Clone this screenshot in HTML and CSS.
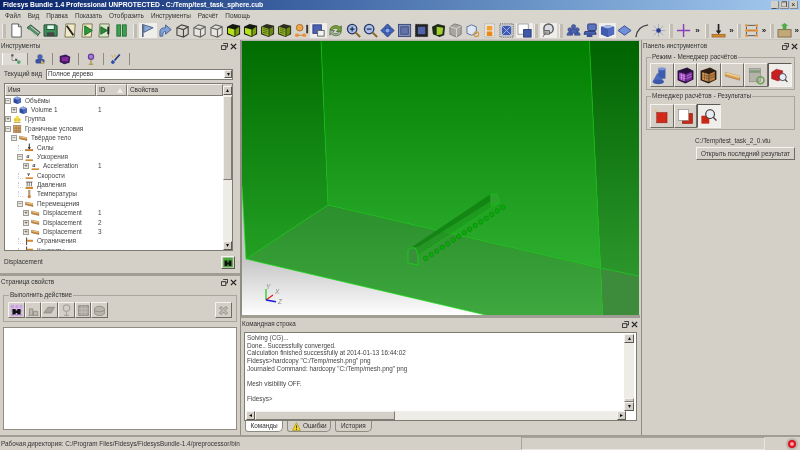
FILE: index.html
```html
<!DOCTYPE html>
<html lang="ru">
<head>
<meta charset="utf-8">
<title>Fidesys Bundle</title>
<link rel="stylesheet" href="styles.css">
</head>
<body>
<svg class="defs" width="0" height="0">
  <defs>
    <symbol id="doc" viewBox="0 0 16 16"><path d="M3 1h7l3 3v11H3z" fill="#fff" stroke="#555"/><path d="M10 1v3h3" fill="#ddd" stroke="#555"/></symbol>
    <symbol id="folder" viewBox="0 0 16 16"><path d="M1 5l4-3 10 8-3 4z" fill="#5a8f6a" stroke="#34513f"/><path d="M3 7l9 7M5 4l9 7" stroke="#cfe0d0" fill="none"/></symbol>
    <symbol id="save" viewBox="0 0 16 16"><path d="M1 2h13l1 1v11H1z" fill="#3e8f58" stroke="#274f36"/><rect x="4" y="2" width="8" height="5" fill="#dfe" stroke="#274f36"/><rect x="4" y="10" width="8" height="4" fill="#444"/></symbol>
    <symbol id="script" viewBox="0 0 16 16"><path d="M3 1h10l-1 14H2z" fill="#efe9c6" stroke="#7a7350"/><path d="M4 3l7 10" stroke="#222" stroke-width="2"/></symbol>
    <symbol id="splay" viewBox="0 0 16 16"><path d="M3 1h10l-1 14H2z" fill="#efe9c6" stroke="#7a7350"/><path d="M5 3l8 5-8 5z" fill="#2b9a3a" stroke="#176a24"/></symbol>
    <symbol id="sstep" viewBox="0 0 16 16"><path d="M3 1h10l-1 14H2z" fill="#d9e6c8" stroke="#6f7a50"/><path d="M4 4l7 4-7 4z" fill="#2b8a3a" stroke="#176a24"/><path d="M12 4v8" stroke="#222" stroke-width="2"/></symbol>
    <symbol id="pause" viewBox="0 0 16 16"><rect x="3" y="2" width="4" height="12" fill="#3fa050" stroke="#237033"/><rect x="9" y="2" width="4" height="12" fill="#3fa050" stroke="#237033"/></symbol>
    <symbol id="flag" viewBox="0 0 16 16"><path d="M3 1v14" stroke="#44506c" stroke-width="1.500"/><path d="M4 2l10 3-10 5z" fill="#8ea9d4" stroke="#47608f"/></symbol>
    <symbol id="arrow" viewBox="0 0 16 16"><path d="M2 14V9c0-3 3-4 6-4V2l6 5-6 5V9c-2 0-3 1-3 5z" fill="#7f9fd6" stroke="#45628f"/></symbol>
    <symbol id="wire" viewBox="0 0 16 16"><path d="M2 5l5-3 7 2v8l-5 3-7-2zM2 5l7 2 5-3M9 7v8" fill="none" stroke="#444" stroke-width="1.200"/></symbol>
    <symbol id="wire2" viewBox="0 0 16 16"><path d="M2 5l5-3 7 2v8l-5 3-7-2zM2 5l7 2 5-3M9 7v8" fill="#e8e6e0" stroke="#666" stroke-width="1.200"/></symbol>
    <symbol id="gcube" viewBox="0 0 16 16"><path d="M1 4l6-3 8 2v9l-6 3-8-3z" fill="#141810"/><path d="M2 5l7 2v7l-7-3z" fill="#b4e020"/><path d="M10 7l4-3v7l-4 3z" fill="#7ea016"/></symbol>
    <symbol id="gcube2" viewBox="0 0 16 16"><path d="M1 4l6-3 8 2v9l-6 3-8-3z" fill="#2c2c20"/><path d="M2 4l7 2v8l-7-3z" fill="#94b824"/><path d="M3 6l5 1M3 8l5 1M3 10l5 1" stroke="#4c6a10"/><path d="M10 6l4-2v7l-4 3z" fill="#688a12"/></symbol>
    <symbol id="nodes" viewBox="0 0 16 16"><circle cx="6" cy="5" r="3.500" fill="#f0a850" stroke="#a86a20"/><circle cx="3" cy="13" r="2" fill="#ec9a40"/><circle cx="11" cy="13" r="2" fill="#ec9a40"/><path d="M3 13h8" stroke="#d08030"/><path d="M14 2v9" stroke="#333" stroke-width="2"/></symbol>
    <symbol id="squares" viewBox="0 0 16 16"><rect x="2" y="2" width="9" height="9" fill="#4c62b4" stroke="#2a3a80"/><rect x="7" y="8" width="7" height="6" fill="#f4f4f4" stroke="#666"/></symbol>
    <symbol id="rotate" viewBox="0 0 16 16"><path d="M2 7c1-4 8-6 11-2l1-2v6h-5l2-2C9 5 5 5 4 8z" fill="#7ca33c" stroke="#4b6c24"/><path d="M14 10c-1 4-8 5-11 1l-1 2V8h5l-2 2c2 2 5 2 7-1z" fill="#a2b8a0" stroke="#5f7a50"/></symbol>
    <symbol id="zin" viewBox="0 0 16 16"><circle cx="6.500" cy="6.500" r="5" fill="#aac0e8" stroke="#283860" stroke-width="1.400"/><path d="M4 6.500h5M6.500 4v5" stroke="#1c2a50" stroke-width="1.300"/><path d="M10 10l5 5" stroke="#8a6a30" stroke-width="2.200"/></symbol>
    <symbol id="zout" viewBox="0 0 16 16"><circle cx="6.500" cy="6.500" r="5" fill="#aac0e8" stroke="#283860" stroke-width="1.400"/><path d="M4 6.500h5" stroke="#1c2a50" stroke-width="1.300"/><path d="M10 10l5 5" stroke="#8a6a30" stroke-width="2.200"/></symbol>
    <symbol id="move" viewBox="0 0 16 16"><path d="M8 1l3 3-1 2 2-1 3 3-3 3-2-1 1 2-3 3-3-3 1-2-2 1-3-3 3-3 2 1-1-2z" fill="#3f62bc" stroke="#283f80"/><circle cx="8" cy="8" r="2" fill="#8ea8e0"/></symbol>
    <symbol id="frame" viewBox="0 0 16 16"><rect x="1.500" y="1.500" width="13" height="13" fill="#8090c0" stroke="#3a4870"/><rect x="4" y="4" width="8" height="8" fill="#6272aa" stroke="#444f78"/></symbol>
    <symbol id="framed" viewBox="0 0 16 16"><rect x="1" y="1" width="14" height="14" fill="#222"/><rect x="1" y="1" width="14" height="14" fill="none" stroke="#ccc" stroke-dasharray="1 1"/><rect x="4" y="4" width="8" height="8" fill="#4f63a8"/></symbol>
    <symbol id="gdark" viewBox="0 0 16 16"><path d="M1 4l6-3 8 2-1 10-5 2-7-3z" fill="#1e2a1a"/><path d="M6 4l7 1-1 7-6 1z" fill="#a4cf30"/></symbol>
    <symbol id="gray" viewBox="0 0 16 16"><path d="M2 4l5-3 7 2v9l-5 3-7-3z" fill="#a8a6a0" stroke="#7c7a74"/><path d="M2 4l7 2 5-3M9 6v9" stroke="#d8d6d0" fill="none"/></symbol>
    <symbol id="cubeo" viewBox="0 0 16 16"><path d="M2 4l5-2 5 2v7l-5 2-5-2z" fill="#dfe6f4" stroke="#56709c"/><circle cx="12" cy="12" r="2.500" fill="none" stroke="#d89a40" stroke-width="1.300"/></symbol>
    <symbol id="orange" viewBox="0 0 16 16"><rect x="3" y="1" width="10" height="14" fill="#eee" stroke="#999" stroke-dasharray="1 1"/><rect x="5" y="3" width="6" height="5" fill="#f0a030"/><rect x="5" y="9" width="6" height="5" fill="#e88818"/></symbol>
    <symbol id="bluex" viewBox="0 0 16 16"><rect x="1" y="1" width="14" height="14" fill="#d8d8d8" stroke="#444" stroke-dasharray="1 1"/><rect x="3" y="3" width="10" height="10" fill="#3f5ab0"/><path d="M3 3l10 10M13 3L3 13" stroke="#a8b8e8"/></symbol>
    <symbol id="wblue" viewBox="0 0 16 16"><rect x="1" y="1" width="11" height="11" fill="#fff" stroke="#999"/><rect x="7" y="7" width="8" height="8" fill="#3f5aa8" stroke="#2a3a78"/></symbol>
    <symbol id="lens" viewBox="0 0 16 16"><circle cx="8" cy="6" r="5" fill="#d8dce4" stroke="#555" stroke-width="1.500"/><path d="M5 10l-3 5M3 8h6v4H3z" fill="#aaa" stroke="#666"/></symbol>
    <symbol id="people" viewBox="0 0 16 16"><g fill="#4a62b0" stroke="#2a3a78" stroke-width=".6"><circle cx="4" cy="7" r="2"/><circle cx="12" cy="7" r="2"/><circle cx="8" cy="4" r="2.300"/><path d="M1 13c0-5 6-5 6 0zM9 13c0-5 6-5 6 0z"/><path d="M4 10c0-5 8-5 8 0v1H4z"/></g></symbol>
    <symbol id="comp" viewBox="0 0 16 16"><rect x="5" y="1" width="9" height="7" rx="1" fill="#5a74c0" stroke="#2a3a78"/><path d="M2 9h11l1 3H1z" fill="#4a62b0" stroke="#2a3a78"/><rect x="4" y="12" width="6" height="3" fill="#3a4f98"/></symbol>
    <symbol id="bcube" viewBox="0 0 16 16"><path d="M1 4l8-2 6 2v8l-7 3-7-3z" fill="#2e4a98"/><path d="M1 4l7 2 7-2-6-2z" fill="#a8bce8"/><path d="M8 6v9l7-3V4z" fill="#4f6cc0"/><path d="M1 4l7 2v9l-7-3z" fill="#3f5cb0"/></symbol>
    <symbol id="diam" viewBox="0 0 16 16"><path d="M1 8l7-5 7 5-7 5z" fill="#6f90d8" stroke="#36508f"/></symbol>
    <symbol id="curve" viewBox="0 0 16 16"><path d="M2 15C3 7 8 3 15 2" fill="none" stroke="#444" stroke-width="1.500"/></symbol>
    <symbol id="star" viewBox="0 0 16 16"><path d="M8 1v14M1 8h14M3 3l10 10M13 3L3 13" stroke="#9a9fb8" stroke-width=".8"/><circle cx="8" cy="8" r="2.500" fill="#2a3a90"/></symbol>
    <symbol id="plus" viewBox="0 0 16 16"><path d="M8 1v14M1 8h14" stroke="#8a40b8" stroke-width="1.500"/></symbol>
    <symbol id="force" viewBox="0 0 16 16"><path d="M8 1v9" stroke="#222" stroke-width="1.800"/><path d="M5 8l3 4 3-4z" fill="#222"/><rect x="1" y="12" width="14" height="3" fill="#d4882e" stroke="#8a5518" stroke-width=".6"/></symbol>
    <symbol id="rnodes" viewBox="0 0 16 16"><rect x="2.500" y="2.500" width="11" height="11" fill="none" stroke="#555"/><path d="M2 8h12" stroke="#d08030" stroke-width="2"/><g fill="#e89a40"><circle cx="2.500" cy="2.500" r="1.500"/><circle cx="13.500" cy="2.500" r="1.500"/><circle cx="2.500" cy="13.500" r="1.500"/><circle cx="13.500" cy="13.500" r="1.500"/><circle cx="2.500" cy="8" r="1.500"/><circle cx="13.500" cy="8" r="1.500"/></g></symbol>
    <symbol id="box" viewBox="0 0 16 16"><rect x="1" y="7" width="14" height="8" fill="#c2a878" stroke="#84704a"/><path d="M6 7V3H4l4-3 4 3h-2v4z" fill="#4caa48"/></symbol>
    <symbol id="tree" viewBox="0 0 16 16"><path d="M3 3h3M8 9h3" stroke="#555" stroke-width="3"/><path d="M4 4v6h5" fill="none" stroke="#888"/><circle cx="13" cy="12" r="2.500" fill="#58a878"/></symbol>
    <symbol id="geo" viewBox="0 0 16 16"><circle cx="8" cy="5" r="3.500" fill="#4a62b0"/><rect x="2" y="8" width="12" height="6" rx="2" fill="#3a52a0"/><path d="M10 9l4 5h-5z" fill="#d8b048"/></symbol>
    <symbol id="mesh" viewBox="0 0 16 16"><path d="M1 4l8-2 6 3-1 8-7 2-6-3z" fill="#3a1a5c"/><path d="M3 6l7-1 3 1-1 5H4z" fill="#8a2a9a"/></symbol>
    <symbol id="pin" viewBox="0 0 16 16"><circle cx="8" cy="5" r="3.500" fill="#a080d0" stroke="#6a3aa0" stroke-width="1.500"/><path d="M8 9v6M5 15h6" stroke="#a88a30" stroke-width="1.500"/></symbol>
    <symbol id="brush" viewBox="0 0 16 16"><path d="M13 2L6 10" stroke="#233a90" stroke-width="2.500"/><path d="M3 9l4 3-3 3-3-2z" fill="#3050b0"/><path d="M2 3l2 3M6 2l1 3" stroke="#d8b048" stroke-width="1.500"/></symbol>
    <symbol id="vol" viewBox="0 0 16 16"><path d="M1 4l7-3 7 3v8l-7 3-7-3z" fill="#2e4a98"/><path d="M1 4l7 3 7-3-7-3z" fill="#8ea4dc"/><path d="M8 7v8l7-3V4z" fill="#4f6cc0"/></symbol>
    <symbol id="grp" viewBox="0 0 16 16"><circle cx="5" cy="9" r="3.500" fill="#e8c830"/><circle cx="11" cy="9" r="3.500" fill="#e8c830"/><circle cx="8" cy="5" r="3.500" fill="#f4dc50"/><path d="M2 14h12" stroke="#a89020" stroke-width="1.500"/></symbol>
    <symbol id="bc" viewBox="0 0 16 16"><rect x="1" y="1" width="14" height="14" fill="#d8a468" stroke="#8a6a40"/><path d="M1 6h14M1 11h14M6 1v14M11 1v14" stroke="#8a6a40"/></symbol>
    <symbol id="plate" viewBox="0 0 16 16"><path d="M1 4l14 3v5L1 9z" fill="#d08a3a" stroke="#7a5a30"/><path d="M1 4l14 3v2L1 6z" fill="#f0c890"/></symbol>
    <symbol id="accel" viewBox="0 0 16 16"><text x="3" y="10" font-size="11" font-style="italic" font-weight="bold" font-family="Liberation Serif" fill="#333">a</text><rect x="1" y="12" width="14" height="3" fill="#d4882e"/></symbol>
    <symbol id="vel" viewBox="0 0 16 16"><text x="4" y="10" font-size="12" font-style="italic" font-weight="bold" font-family="Liberation Serif" fill="#333">v</text><rect x="1" y="12" width="14" height="3" fill="#d4882e"/></symbol>
    <symbol id="press" viewBox="0 0 16 16"><path d="M2 2h12M4 2v8M8 2v8M12 2v8" stroke="#333" stroke-width="1.300"/><rect x="1" y="11" width="14" height="4" fill="#d4882e"/></symbol>
    <symbol id="temp" viewBox="0 0 16 16"><rect x="6.500" y="0" width="3" height="11" fill="#caa078" stroke="#8a6a40" stroke-width=".6"/><circle cx="8" cy="12.500" r="3" fill="#c88040"/></symbol>
    <symbol id="constr" viewBox="0 0 16 16"><path d="M3 1v14" stroke="#5a4a30" stroke-width="2"/><path d="M4 5h11v4H4z" fill="#d4882e"/></symbol>
    <symbol id="run" viewBox="0 0 16 16"><rect x="1" y="1" width="14" height="14" fill="#4aa83a"/><path d="M3 5h4v8H3zM9 5h4v8H9zM6 8h4v3H6z" fill="#111"/></symbol>
    <symbol id="runp" viewBox="0 0 16 16"><rect x="1" y="1" width="14" height="14" fill="#c8a0e0"/><path d="M1 6h14M1 11h14M6 1v14M11 1v14" stroke="#e8d8f0"/><path d="M3 6h4v7H3zM9 6h4v7H9zM6 8h4v3H6z" fill="#111"/></symbol>
    <symbol id="dis1" viewBox="0 0 16 16"><path d="M2 14h12M3 14V6h4v8M8 14V9h5v5" fill="#bdb9b0" stroke="#8c897f"/></symbol>
    <symbol id="dis2" viewBox="0 0 16 16"><path d="M1 11l5-7h8l-4 7z" fill="#a8a59c" stroke="#8c897f"/></symbol>
    <symbol id="dis3" viewBox="0 0 16 16"><circle cx="8" cy="5" r="4" fill="none" stroke="#a8a59c" stroke-width="1.500"/><path d="M8 9v6M5 14h6" stroke="#a8a59c" stroke-width="1.500"/></symbol>
    <symbol id="dis4" viewBox="0 0 16 16"><rect x="2" y="2" width="12" height="12" fill="#a8a59c" stroke="#8c897f"/><path d="M2 6h12M2 10h12M6 2v12M10 2v12" stroke="#c8c5bc"/></symbol>
    <symbol id="dis5" viewBox="0 0 16 16"><path d="M2 5c3-3 9-3 12 0v7c-3 3-9 3-12 0z" fill="#b8b5ac" stroke="#8c897f"/><path d="M2 8c3 2 9 2 12 0" fill="none" stroke="#8c897f"/></symbol>
    <symbol id="xdis" viewBox="0 0 16 16"><path d="M3 5l2-2 3 3 3-3 2 2-3 3 3 3-2 2-3-3-3 3-2-2 3-3z" fill="#c0bdb4" stroke="#84817a"/></symbol>
    <symbol id="cyl" viewBox="0 0 24 24"><path d="M8 3h9v13H8z" fill="#3c5cb0"/><ellipse cx="12.500" cy="3.500" rx="5" ry="2" fill="#7c94d8"/><path d="M7 9l8 11H1z" fill="#4a6cc4" stroke="#2a3a78" stroke-width=".4"/><ellipse cx="8" cy="20" rx="7" ry="3" fill="#3c58aa"/></symbol>
    <symbol id="mpur" viewBox="0 0 24 24"><path d="M2 6l12-4 8 4v11l-10 5-10-4z" fill="#26123c"/><path d="M4 8l8 2v10l-8-3z" fill="#9a3ab8"/><path d="M13 10l7-3v10l-7 3z" fill="#7a2a9a"/><path d="M4 11l8 2M4 14l8 2M7 9v9M10 10v9M13 13l7-3M13 16l7-3" stroke="#e0b0f0" stroke-width=".7"/></symbol>
    <symbol id="morg" viewBox="0 0 24 24"><path d="M2 6l12-4 8 4v11l-10 5-10-4z" fill="#2c1e10"/><path d="M4 8l8 2v10l-8-3z" fill="#d8a060"/><path d="M13 10l7-3v10l-7 3z" fill="#c08040"/><path d="M4 11l8 2M4 14l8 2M7 9v9M10 10v9M13 13l7-3M13 16l7-3" stroke="#5a3a18" stroke-width=".7"/></symbol>
    <symbol id="bar" viewBox="0 0 24 24"><path d="M3 8l18 5v5L3 13z" fill="#d89a50" stroke="#8a6a30" stroke-width=".5"/><path d="M3 8l18 5v2L3 10z" fill="#f0d090"/></symbol>
    <symbol id="calc" viewBox="0 0 24 24"><rect x="3" y="3" width="14" height="17" fill="#b4b2aa" stroke="#807e78" stroke-width=".6"/><path d="M3 7h14" stroke="#7c9a78" stroke-width="3"/><circle cx="17" cy="18" r="4.500" fill="none" stroke="#6aa050" stroke-width="2"/></symbol>
    <symbol id="redlens" viewBox="0 0 24 24"><path d="M2 8l6-4 8 2v10l-6 3-8-3z" fill="#c82020" stroke="#7a1010" stroke-width=".5"/><circle cx="16" cy="14" r="4.500" fill="#e8ecf4" stroke="#445" stroke-width="1.200"/><path d="M19 17l3 3" stroke="#444" stroke-width="1.600"/></symbol>
    <symbol id="rnew" viewBox="0 0 24 24"><rect x="6" y="7" width="13" height="13" fill="#d42818" stroke="#7a1a10" stroke-width=".6"/><path d="M5 3v4M3 5h4" stroke="#e8c060"/></symbol>
    <symbol id="rcopy" viewBox="0 0 24 24"><rect x="8" y="8" width="13" height="13" fill="#c42818" stroke="#7a1a10" stroke-width=".6"/><rect x="3" y="3" width="13" height="14" fill="#fff" stroke="#777" stroke-width=".7"/></symbol>
    <symbol id="rlens" viewBox="0 0 24 24"><rect x="3" y="11" width="10" height="10" fill="#c82818"/><circle cx="14" cy="9" r="5.500" fill="#e8ecf4" stroke="#333" stroke-width="1.400"/><path d="M18 13l4 4" stroke="#444" stroke-width="1.800"/></symbol>
    <symbol id="warn" viewBox="0 0 16 16"><path d="M8 1l7 14H1z" fill="#f4d820" stroke="#9a8410"/><path d="M8 6v5M8 12v2" stroke="#222" stroke-width="1.400"/></symbol>
    <symbol id="restore" viewBox="0 0 8 8"><path d="M2.500 .5h5v4h-2M.5 3h5v4.500h-5z" fill="none" stroke="#222"/></symbol>
    <symbol id="close" viewBox="0 0 8 8"><path d="M1 1l6 6M7 1L1 7" stroke="#222" stroke-width="1.500"/></symbol>
  </defs>
</svg>

<div class="app">
  <header class="titlebar">
    <span class="titletext">Fidesys Bundle 1.4 Professional UNPROTECTED - C:/Temp/test_task_sphere.cub</span>
    <div class="winbtns"><span class="winbtn">_</span><span class="winbtn">❐</span><span class="winbtn">×</span></div>
  </header>
  <nav class="menubar">
    <span>Файл</span><span>Вид</span><span>Правка</span><span>Показать</span><span>Отобразить</span><span>Инструменты</span><span>Расчёт</span><span>Помощь</span>
  </nav>
  <div class="toolbar">
    <span class="grip"></span>
    <svg class="ti"><use href="#doc"/></svg><svg class="ti"><use href="#folder"/></svg><svg class="ti"><use href="#save"/></svg>
    <span class="tgap"></span>
    <svg class="ti"><use href="#script"/></svg><svg class="ti"><use href="#splay"/></svg><svg class="ti"><use href="#sstep"/></svg><svg class="ti"><use href="#pause"/></svg>
    <span class="grip wide"></span>
    <svg class="ti on"><use href="#flag"/></svg><svg class="ti"><use href="#arrow"/></svg><svg class="ti"><use href="#wire"/></svg><svg class="ti"><use href="#wire2"/></svg><svg class="ti"><use href="#wire2"/></svg><svg class="ti"><use href="#gcube"/></svg><svg class="ti"><use href="#gcube"/></svg><svg class="ti"><use href="#gcube2"/></svg><svg class="ti"><use href="#gcube2"/></svg><svg class="ti"><use href="#nodes"/></svg><svg class="ti on"><use href="#squares"/></svg><svg class="ti"><use href="#rotate"/></svg><svg class="ti"><use href="#zin"/></svg><svg class="ti"><use href="#zout"/></svg><svg class="ti"><use href="#move"/></svg><svg class="ti"><use href="#frame"/></svg><svg class="ti"><use href="#framed"/></svg><svg class="ti"><use href="#gdark"/></svg><svg class="ti"><use href="#gray"/></svg><svg class="ti"><use href="#cubeo"/></svg><svg class="ti"><use href="#orange"/></svg><svg class="ti"><use href="#bluex"/></svg><svg class="ti on"><use href="#wblue"/></svg>
    <span class="grip"></span>
    <svg class="ti on"><use href="#lens"/></svg>
    <span class="grip"></span>
    <svg class="ti"><use href="#people"/></svg><svg class="ti"><use href="#comp"/></svg><svg class="ti on"><use href="#bcube"/></svg><svg class="ti"><use href="#diam"/></svg><svg class="ti"><use href="#curve"/></svg><svg class="ti"><use href="#star"/></svg>
    <span class="grip"></span>
    <svg class="ti"><use href="#plus"/></svg><span class="more wide">»</span>
    <span class="grip"></span>
    <svg class="ti"><use href="#force"/></svg><span class="more">»</span>
    <span class="grip"></span>
    <svg class="ti"><use href="#rnodes"/></svg><span class="more">»</span>
    <span class="grip"></span>
    <svg class="ti"><use href="#box"/></svg><span class="more">»</span>
  </div>

  <main class="workspace">
    <aside class="leftcol">
      <section class="tools">
        <div class="dockhead"><span>Инструменты</span><span class="dockbtns"><svg class="db"><use href="#restore"/></svg><svg class="db"><use href="#close"/></svg></span></div>
        <div class="tabs">
          <span class="tab active"><svg class="tabi"><use href="#tree"/></svg></span>
          <span class="tab"><svg class="tabi"><use href="#geo"/></svg></span>
          <span class="tab"><svg class="tabi"><use href="#mesh"/></svg></span>
          <span class="tab"><svg class="tabi"><use href="#pin"/></svg></span>
          <span class="tab"><svg class="tabi"><use href="#brush"/></svg></span>
        </div>
        <div class="viewrow">
          <span>Текущий вид</span>
          <div class="combo"><span>Полное дерево</span><span class="sbtn">▾</span></div>
        </div>
        <div class="treeframe">
          <div class="treemain">
            <div class="treehead"><span class="hc c1">Имя</span><span class="hc c2">ID<i class="sort"></i></span><span class="hc c3">Свойства</span></div>
            <div class="treebody">
              <div class="row l0"><span class="nm"><i class="exp">−</i><svg class="ni"><use href="#vol"/></svg>Объёмы</span></div>
              <div class="row l1"><span class="nm"><i class="exp">+</i><svg class="ni"><use href="#vol"/></svg>Volume 1</span><span class="id">1</span></div>
              <div class="row l0"><span class="nm"><i class="exp">+</i><svg class="ni"><use href="#grp"/></svg>Группа</span></div>
              <div class="row l0"><span class="nm"><i class="exp">−</i><svg class="ni"><use href="#bc"/></svg>Граничные условия</span></div>
              <div class="row l1"><span class="nm"><i class="exp">−</i><svg class="ni"><use href="#plate"/></svg>Твёрдое тело</span></div>
              <div class="row l2"><span class="nm"><i class="exp none"></i><svg class="ni"><use href="#force"/></svg>Силы</span></div>
              <div class="row l2"><span class="nm"><i class="exp">−</i><svg class="ni"><use href="#accel"/></svg>Ускорения</span></div>
              <div class="row l3"><span class="nm"><i class="exp">+</i><svg class="ni"><use href="#accel"/></svg>Acceleration</span><span class="id">1</span></div>
              <div class="row l2"><span class="nm"><i class="exp none"></i><svg class="ni"><use href="#vel"/></svg>Скорости</span></div>
              <div class="row l2"><span class="nm"><i class="exp none"></i><svg class="ni"><use href="#press"/></svg>Давления</span></div>
              <div class="row l2"><span class="nm"><i class="exp none"></i><svg class="ni"><use href="#temp"/></svg>Температуры</span></div>
              <div class="row l2"><span class="nm"><i class="exp">−</i><svg class="ni"><use href="#plate"/></svg>Перемещения</span></div>
              <div class="row l3"><span class="nm"><i class="exp">+</i><svg class="ni"><use href="#plate"/></svg>Displacement</span><span class="id">1</span></div>
              <div class="row l3"><span class="nm"><i class="exp">+</i><svg class="ni"><use href="#plate"/></svg>Displacement</span><span class="id">2</span></div>
              <div class="row l3"><span class="nm"><i class="exp">+</i><svg class="ni"><use href="#plate"/></svg>Displacement</span><span class="id">3</span></div>
              <div class="row l2"><span class="nm"><i class="exp none"></i><svg class="ni"><use href="#constr"/></svg>Ограничения</span></div>
              <div class="row l2"><span class="nm"><i class="exp none"></i><svg class="ni"><use href="#constr"/></svg>Контакты</span></div>
            </div>
          </div>
          <div class="vscroll tree">
            <span class="sbtn">▴</span><span class="thumb"></span><span class="track"></span><span class="sbtn">▾</span>
          </div>
        </div>
        <div class="selrow"><span>Displacement</span><span class="runbtn"><svg class="runi"><use href="#run"/></svg></span></div>
      </section>
      <div class="splitter"></div>
      <section class="props">
        <div class="dockhead"><span>Страница свойств</span><span class="dockbtns"><svg class="db"><use href="#restore"/></svg><svg class="db"><use href="#close"/></svg></span></div>
        <fieldset class="actions">
          <legend>Выполнить действие</legend>
          <div class="actrow">
            <span class="abtn"><svg class="ai"><use href="#runp"/></svg></span><span class="abtn"><svg class="ai"><use href="#dis1"/></svg></span><span class="abtn"><svg class="ai"><use href="#dis2"/></svg></span><span class="abtn"><svg class="ai"><use href="#dis3"/></svg></span><span class="abtn"><svg class="ai"><use href="#dis4"/></svg></span><span class="abtn"><svg class="ai"><use href="#dis5"/></svg></span>
            <span class="abtn last"><svg class="ai"><use href="#xdis"/></svg></span>
          </div>
        </fieldset>
        <div class="proplist"></div>
      </section>
    </aside>

    <section class="center">
      <div class="viewport">
        <svg class="scene" viewBox="242 40 397 275" preserveAspectRatio="none">
          <defs>
            <linearGradient id="bgw" x1="0" y1="258" x2="0" y2="315" gradientUnits="userSpaceOnUse"><stop offset="0" stop-color="#c6c6c6"/><stop offset="1" stop-color="#fff"/></linearGradient>
            <linearGradient id="wb" x1="0" y1="40" x2="0" y2="280" gradientUnits="userSpaceOnUse"><stop offset="0" stop-color="#007e00"/><stop offset="1" stop-color="#31b131"/></linearGradient>
            <linearGradient id="wl" x1="0" y1="40" x2="0" y2="260" gradientUnits="userSpaceOnUse"><stop offset="0" stop-color="#006c00"/><stop offset="1" stop-color="#24a024"/></linearGradient>
            <linearGradient id="wr" x1="0" y1="40" x2="0" y2="275" gradientUnits="userSpaceOnUse"><stop offset="0" stop-color="#006400"/><stop offset="1" stop-color="#2c962c"/></linearGradient>
            <linearGradient id="fl" x1="0" y1="204" x2="0" y2="315" gradientUnits="userSpaceOnUse"><stop offset="0" stop-color="#2b8f2b"/><stop offset="1" stop-color="#3fa83f"/></linearGradient>
          </defs>
          <rect x="242" y="40" width="397" height="275" fill="url(#bgw)"/>
          <path d="M242 40H321L328 204L246 258L242 185Z" fill="url(#wl)"/>
          <path d="M321 40H589.300L600.700 267L328 204Z" fill="url(#wb)"/>
          <path d="M589.300 40H639V275L600.700 267Z" fill="url(#wr)"/>
          <path d="M328 204L600.700 267L602.700 315H490L246 258Z" fill="url(#fl)"/>
          <path d="M600.700 267L639 275V315H602.700Z" fill="#3c8c3c"/>
          <g fill="none" stroke="#0cc60c" stroke-width=".7">
            <path d="M321 40L328 204L600.700 267L639 275"/>
            <path d="M328 204L246 258"/>
            <path d="M589.300 40L602.700 315"/>
            <path d="M242 185L246 258L490 315" stroke="#12e012"/>
          </g>
          <path d="M408 249L412 246L490.700 193H497L500 201L418 255V264L408 262Z" fill="#1c941c" fill-opacity=".55"/>
          <path d="M412 246L490.700 193L491 200L418 246Z" fill="#0c7a0c" fill-opacity=".6"/>
          <path d="M408 249Q412 245 416 248L418 255V264L408 262Z" fill="#3a8f3a" stroke="#12dd12" stroke-width=".7"/>
          <path d="M418 255L500 201" fill="none" stroke="#14c814" stroke-width=".6"/>
          <path d="M490.700 193H497L500 201L491 205Z" fill="#2fa02f" stroke="#12c812" stroke-width=".6"/>
          <g fill="#0aaa0a" stroke="#0b860b" stroke-width=".6">
            <circle cx="425.700" cy="257.300" r="2.300"/><circle cx="431.200" cy="253.700" r="2.300"/><circle cx="436.700" cy="250" r="2.300"/><circle cx="442.200" cy="246.400" r="2.300"/><circle cx="447.700" cy="242.800" r="2.300"/><circle cx="453.200" cy="239.100" r="2.300"/><circle cx="458.700" cy="235.500" r="2.300"/><circle cx="464.200" cy="231.800" r="2.300"/><circle cx="469.700" cy="228.200" r="2.300"/><circle cx="475.200" cy="224.600" r="2.300"/><circle cx="480.700" cy="220.900" r="2.300"/><circle cx="486.200" cy="217.300" r="2.300"/><circle cx="491.700" cy="213.600" r="2.300"/><circle cx="497.200" cy="210" r="2.300"/><circle cx="502.700" cy="206.300" r="2.300"/>
          </g>
          <path d="M266 299V288" stroke="#22cc22" stroke-width="1.300"/>
          <path d="M266 299L273 294" stroke="#e02020" stroke-width="1.300"/>
          <path d="M266 299L276 300.700" stroke="#1818e0" stroke-width="1.500"/>
          <g class="axis">
            <text x="266" y="288">Y</text><text x="275" y="293">X</text><text x="278" y="303">Z</text>
          </g>
        </svg>
      </div>
      <div class="dockhead cmdhead"><span>Командная строка</span><span class="dockbtns"><svg class="db"><use href="#restore"/></svg><svg class="db"><use href="#close"/></svg></span></div>
      <div class="console">
        <div class="consoletop">
          <pre class="log">Solving (CG)...
Done.. Successfully converged.
Calculation finished successfully at 2014-01-13 16:44:02
Fidesys&gt;hardcopy "C:/Temp/mesh.png" png
Journaled Command: hardcopy "C:/Temp/mesh.png" png

Mesh visibility OFF.

Fidesys&gt;</pre>
          <div class="vscroll cmd"><span class="sbtn">▴</span><span class="track"></span><span class="thumb"></span><span class="sbtn">▾</span></div>
        </div>
        <div class="hscroll"><span class="sbtn">◂</span><span class="hthumb"></span><span class="track"></span><span class="sbtn">▸</span></div>
      </div>
      <div class="cmdtabs">
        <span class="ctab active">Команды</span>
        <span class="ctab err"><svg class="wi"><use href="#warn"/></svg>Ошибки</span>
        <span class="ctab hist">История</span>
      </div>
    </section>

    <aside class="rightcol">
      <div class="dockhead right"><span>Панель инструментов</span><span class="dockbtns"><svg class="db"><use href="#restore"/></svg><svg class="db"><use href="#close"/></svg></span></div>
      <fieldset class="rgroup one">
        <legend>Режим - Менеджер расчётов</legend>
        <div class="bigrow">
          <span class="big"><svg class="bi"><use href="#cyl"/></svg></span><span class="big"><svg class="bi"><use href="#mpur"/></svg></span><span class="big"><svg class="bi"><use href="#morg"/></svg></span><span class="big"><svg class="bi"><use href="#bar"/></svg></span><span class="big"><svg class="bi"><use href="#calc"/></svg></span><span class="big on"><svg class="bi"><use href="#redlens"/></svg></span>
        </div>
      </fieldset>
      <fieldset class="rgroup two">
        <legend>Менеджер расчётов - Результаты</legend>
        <div class="bigrow">
          <span class="big"><svg class="bi"><use href="#rnew"/></svg></span><span class="big"><svg class="bi"><use href="#rcopy"/></svg></span><span class="big on"><svg class="bi"><use href="#rlens"/></svg></span>
        </div>
      </fieldset>
      <div class="respath">C:/Temp/test_task_2_0.vtu</div>
      <div class="openbtn">Открыть последний результат</div>
    </aside>
  </main>

  <footer class="statusbar">
    <span class="workdir">Рабочая директория: C:/Program Files/Fidesys/FidesysBundle-1.4/preprocessor/bin</span>
    <span class="field"></span>
    <span class="led"></span>
  </footer>
</div>
</body>
</html>
```

FILE: styles.css
```css
* { box-sizing: border-box; }
html, body { margin: 0; padding: 0; width: 800px; height: 450px; overflow: hidden; background: #d4d0c8; }
.defs { position: absolute; }
.app {
  width: 800px; height: 450px; display: flex; flex-direction: column;
  font: 6.400px/8px "Liberation Sans", Arial, sans-serif; color: #333;
  background: #d4d0c8; filter: blur(.42px); overflow: hidden;
}

.titlebar {
  height: 10px; flex: none; display: flex; align-items: center; justify-content: space-between;
  padding: 0 2px 0 3px;
  background: linear-gradient(90deg, #0a246a 0%, #3a5f9f 35%, #6f9acb 70%, #a6caf0 100%);
}
.titletext { color: #fff; font-weight: bold; font-size: 6.750px; white-space: nowrap; }
.winbtns { display: flex; gap: 1px; }
.winbtn { width: 8.500px; height: 8px; background: #d4d0c8; color: #111; font-size: 7px; line-height: 8px; text-align: center; border: 1px solid #888; border-width: 0 1px 1px 0; }

.menubar { height: 12px; flex: none; display: flex; align-items: center; gap: 7px; padding-left: 5px; font-size: 6.400px; background: #d8d5cd; }

.toolbar { height: 18px; flex: none; display: flex; align-items: center; background: #d8d5ce; border-bottom: 1px solid #c8c5bc; }
.ti { width: 17.100px; height: 15px; flex: none; padding: 0 1px; }
.ti.on { background: #efeeea; }
.grip { width: 7.500px; height: 14px; flex: none; }
.grip::before { content: ""; display: block; width: 3px; height: 14px; margin: 0 auto; background: #c0bdb4; border-left: 1px solid #ecebe6; }
.grip.wide { width: 9.300px; }
.tgap { width: 3px; flex: none; }
.more { width: 8px; flex: none; font-size: 8px; font-weight: bold; text-align: center; color: #222; }
.more.wide { width: 11px; }

.workspace { height: 395px; flex: none; display: flex; }

.leftcol { width: 241px; flex: none; display: flex; flex-direction: column; border-right: 1px solid #8f8c84; }
.tools { height: 233px; flex: none; display: flex; flex-direction: column; }
.dockhead { height: 12px; flex: none; display: flex; align-items: center; justify-content: space-between; padding: 0 3px 0 1px; font-size: 6.300px; }
.dockbtns { display: flex; gap: 2px; align-items: center; }
.db { width: 7px; height: 7px; }

.tabs { height: 13px; flex: none; display: flex; padding: 1px 0 0 2px; }
.tab { width: 25.500px; height: 12px; display: flex; align-items: center; justify-content: center; border-right: 1px solid #8f8c84; }
.tab.active { background: #dedbd4; border-left: 1px solid #fff; }
.tabi { width: 12px; height: 12px; }

.viewrow { height: 18px; flex: none; display: flex; align-items: center; padding: 0 7px 0 4px; gap: 1px; }
.combo { width: 187px; height: 11px; flex: none; margin-left: auto; background: #fff; border: 1px solid #7e7b73; display: flex; align-items: center; justify-content: space-between; padding-left: 1px; }
.sbtn { display: block; width: 8px; height: 8px; flex: none; background: #d4d0c8; border: 1px solid; border-color: #f4f3ef #5c5a54 #5c5a54 #f4f3ef; color: #111; font-size: 6px; line-height: 6px; text-align: center; }

.treeframe { height: 168px; flex: none; margin: 0 7px 0 4px; border: 1px solid #7e7b73; display: flex; background: #d4d0c8; }
.treemain { flex: 1; min-width: 0; display: flex; flex-direction: column; }
.treehead { height: 12px; flex: none; display: flex; }
.hc { display: flex; align-items: center; justify-content: space-between; padding-left: 2px; border: 1px solid; border-color: #f4f3ef #7e7b73 #7e7b73 #f4f3ef; background: #d4d0c8; }
.c1 { width: 91px; }
.c2 { width: 31px; padding-right: 3px; }
.c3 { flex: 1; }
.sort { width: 0; height: 0; border: 3px solid transparent; border-bottom: 5px solid #f0efeb; border-top: 0; }
.treebody { flex: 1; background: #fff; overflow: hidden; }
.row { height: 9.380px; display: flex; align-items: center; color: #444; }
.nm { width: 91px; flex: none; display: flex; align-items: center; white-space: nowrap; }
.id { padding-left: 2px; }
.l0 .nm { padding-left: 0; }
.l1 .nm { padding-left: 6px; }
.l2 .nm { padding-left: 12px; }
.l3 .nm { padding-left: 18px; }
.exp { width: 6px; height: 6px; flex: none; border: 1px solid #a09d95; background: #ece9e2; font-style: normal; font-size: 6px; line-height: 3.500px; text-align: center; color: #333; }
.exp.none { border: 0; border-left: 1px dotted #ccc; border-bottom: 1px dotted #ccc; background: none; width: 5px; margin-left: 1px; }
.ni { width: 8.500px; height: 8.500px; margin: 0 3.500px 0 2px; flex: none; }

.vscroll { width: 9px; flex: none; display: flex; flex-direction: column; background: #eeece7; }
.vscroll .sbtn { width: 9px; height: 9px; }
.vscroll .track { flex: 1; }
.vscroll.tree .thumb { height: 84px; flex: none; background: #d4d0c8; border: 1px solid; border-color: #f4f3ef #7e7b73 #7e7b73 #f4f3ef; margin-top: 1px; }
.vscroll.tree { margin-top: 2px; }
.vscroll.cmd .thumb { height: 4px; flex: none; background: #d4d0c8; border: 1px solid; border-color: #f4f3ef #7e7b73 #7e7b73 #f4f3ef; }

.selrow { flex: 1; display: flex; align-items: center; justify-content: space-between; padding: 0 5px 0 4px; }
.runbtn { width: 14px; height: 13px; background: #d4d0c8; border: 1px solid; border-color: #f4f3ef #5c5a54 #5c5a54 #f4f3ef; display: flex; }
.runi { width: 12px; height: 11px; }

.splitter { height: 3px; flex: none; background: #a09d95; }

.props { flex: 1; min-height: 0; display: flex; flex-direction: column; }
.actions { margin: 3px 3px 0 3px; height: 31px; flex: none; padding: 0 3px; border: 1px solid #a8a59c; min-width: 0; }
.actions legend { padding: 0 1px; margin-left: 2px; font-size: 6.400px; line-height: 8px; }
.actrow { display: flex; margin-top: 3px; padding-left: 1px; }
.abtn { width: 16.700px; height: 16px; flex: none; background: #d4d0c8; border: 1px solid; border-color: #f4f3ef #6f6c65 #6f6c65 #f4f3ef; display: flex; align-items: center; justify-content: center; }
.abtn.last { margin-left: auto; margin-right: 1px; }
.ai { width: 13px; height: 13px; }
.proplist { margin: 5px 3px 5px 3px; flex: 1; background: #fff; border: 1px solid #8f8c84; }

.center { width: 399px; flex: none; display: flex; flex-direction: column; }
.viewport { height: 275px; flex: none; border-top: 1px solid #b4b1a8; overflow: hidden; border-left: 1px solid #8f8c84; }
.scene { display: block; width: 397px; height: 275px; }
.axis { font: italic 6.500px "Liberation Sans", Arial, sans-serif; fill: #8a8a8a; }
.cmdhead { height: 17px; padding: 0 2px 2px 1px; border-top: 3px solid #a09d95; }

.console { height: 89px; flex: none; margin: 0 3px; border: 1px solid #7e7b73; background: #fff; display: flex; flex-direction: column; }
.consoletop { flex: 1; min-height: 0; display: flex; padding-right: 2px; }
.log { flex: 1; margin: 0; padding: 1px 0 0 2px; font: 6.350px/7.670px "Liberation Sans", Arial, sans-serif; color: #444; white-space: pre; }
.vscroll.cmd { width: 10px; margin-top: 1px; }
.vscroll.cmd .sbtn { width: 10px; }
.hscroll { height: 9px; flex: none; display: flex; background: #eeece7; margin: 0 10px 0 1px; }
.hscroll .sbtn { width: 9px; height: 9px; }
.hthumb { width: 140px; flex: none; background: #d4d0c8; border: 1px solid; border-color: #f4f3ef #7e7b73 #7e7b73 #f4f3ef; }
.hscroll .track { flex: 1; }

.cmdtabs { height: 12px; flex: none; display: flex; padding-left: 4px; gap: 4px; }
.ctab { height: 11px; display: flex; align-items: center; padding: 0 5px; gap: 2px; border: 1px solid #8f8c84; border-top: 0; border-radius: 0 0 5px 3px; white-space: nowrap; }
.ctab.active { background: #fff; width: 38px; justify-content: center; }
.ctab.err { width: 44px; padding: 0 0 0 4px; }
.ctab.hist { width: 37px; }
.wi { width: 9px; height: 9px; flex: none; }

.rightcol { flex: 1; min-width: 0; border-left: 1px solid #8f8c84; margin-left: 1px; display: flex; flex-direction: column; align-items: flex-start; }
.dockhead.right { width: 100%; padding: 0 2px 0 1px; }
.rgroup { margin: 1px 0 0 4px; width: 149px; padding: 0 3px; border: 1px solid #a8a59c; min-width: 0; }
.rgroup legend { font-size: 6.400px; line-height: 8px; padding: 0 1px; margin-left: 1px; }
.rgroup.one { height: 37px; }
.rgroup.one .bigrow { margin-top: 2px; }
.rgroup.two { height: 38px; margin-top: 2px; }
.rgroup.two .bigrow { margin-top: 4px; }
.bigrow { display: flex; }
.big { width: 23.600px; height: 24px; flex: none; background: #d4d0c8; border: 1px solid; border-color: #f4f3ef #6f6c65 #6f6c65 #f4f3ef; display: flex; align-items: center; justify-content: center; }
.big.on { background: #efeeea; border-color: #5c5a54 #f4f3ef #f4f3ef #5c5a54; }
.bi { width: 19px; height: 19px; }
.respath { margin: 7px 0 0 53px; font-size: 6.400px; line-height: 8px; }
.openbtn { margin: 2px 0 0 54px; width: 99px; height: 13px; background: #d4d0c8; border: 1px solid; border-color: #f4f3ef #6f6c65 #6f6c65 #f4f3ef; display: flex; align-items: center; justify-content: center; font-size: 6.400px; white-space: nowrap; }

.statusbar { flex: 1; display: flex; align-items: center; border-top: 2px solid #a09d95; }
.workdir { width: 240px; padding-left: 1px; flex: none; white-space: nowrap; font-size: 6.350px; }
.field { width: 244px; height: 13px; margin-left: 281px; flex: none; border: 1px solid; border-color: #a8a59c #e8e6e0 #e8e6e0 #a8a59c; }
.led { width: 8px; height: 8px; margin-left: 23px; border-radius: 50%; flex: none; background: radial-gradient(circle at 50% 50%, #ffb0b0 0 20%, #ee1020 45%, #a80010 100%); box-shadow: 0 0 0 2px #b8b5ac; }
```
